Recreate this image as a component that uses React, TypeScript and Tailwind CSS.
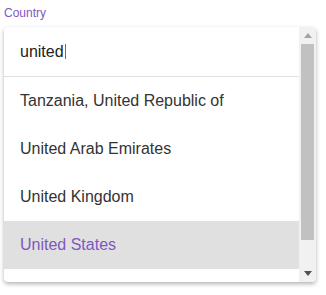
import React from "react"

const options = [
  "Tanzania, United Republic of",
  "United Arab Emirates",
  "United Kingdom",
  "United States",
]

export default function App() {
  return (
    <div className="w-[326px] h-[295px] bg-white font-['Liberation_Sans',Arial,sans-serif]">
      <div className="px-1 pt-[5px] text-[12px] leading-[16px] text-[#7e57c2]">Country</div>
      <div className="mx-1 mt-[6px] w-[312px] h-[255px] rounded bg-white shadow-[0_2px_4px_rgba(0,0,0,0.3)] flex overflow-hidden">
        <div className="flex-1 flex flex-col">
          <div className="h-[50px] border-b border-[#e0e0e0] flex items-center px-4 text-[16px] text-[#222]">
            united<span className="w-px h-[15px] bg-[#7e57c2] ml-px" />
          </div>
          {options.map((o, i) => (
            <div
              key={o}
              className={
                "h-12 shrink-0 flex items-center px-4 text-[16px] " +
                (i === 3 ? "bg-[#e0e0e0] text-[#7e57c2]" : "text-[#333]")
              }
            >
              {o}
            </div>
          ))}
        </div>
        <div className="w-[17px] bg-[#f1f1f1] flex flex-col items-center">
          <div className="h-[17px] flex items-center justify-center">
            <svg width="8" height="5" viewBox="0 0 8 5"><path d="M4 0L8 5H0Z" fill="#a3a3a3" /></svg>
          </div>
          <div className="w-[13px] h-[196px] bg-[#c1c1c1]" />
          <div className="flex-1" />
          <div className="h-[17px] flex items-center justify-center">
            <svg width="8" height="5" viewBox="0 0 8 5"><path d="M0 0H8L4 5Z" fill="#505050" /></svg>
          </div>
        </div>
      </div>
    </div>
  )
}
